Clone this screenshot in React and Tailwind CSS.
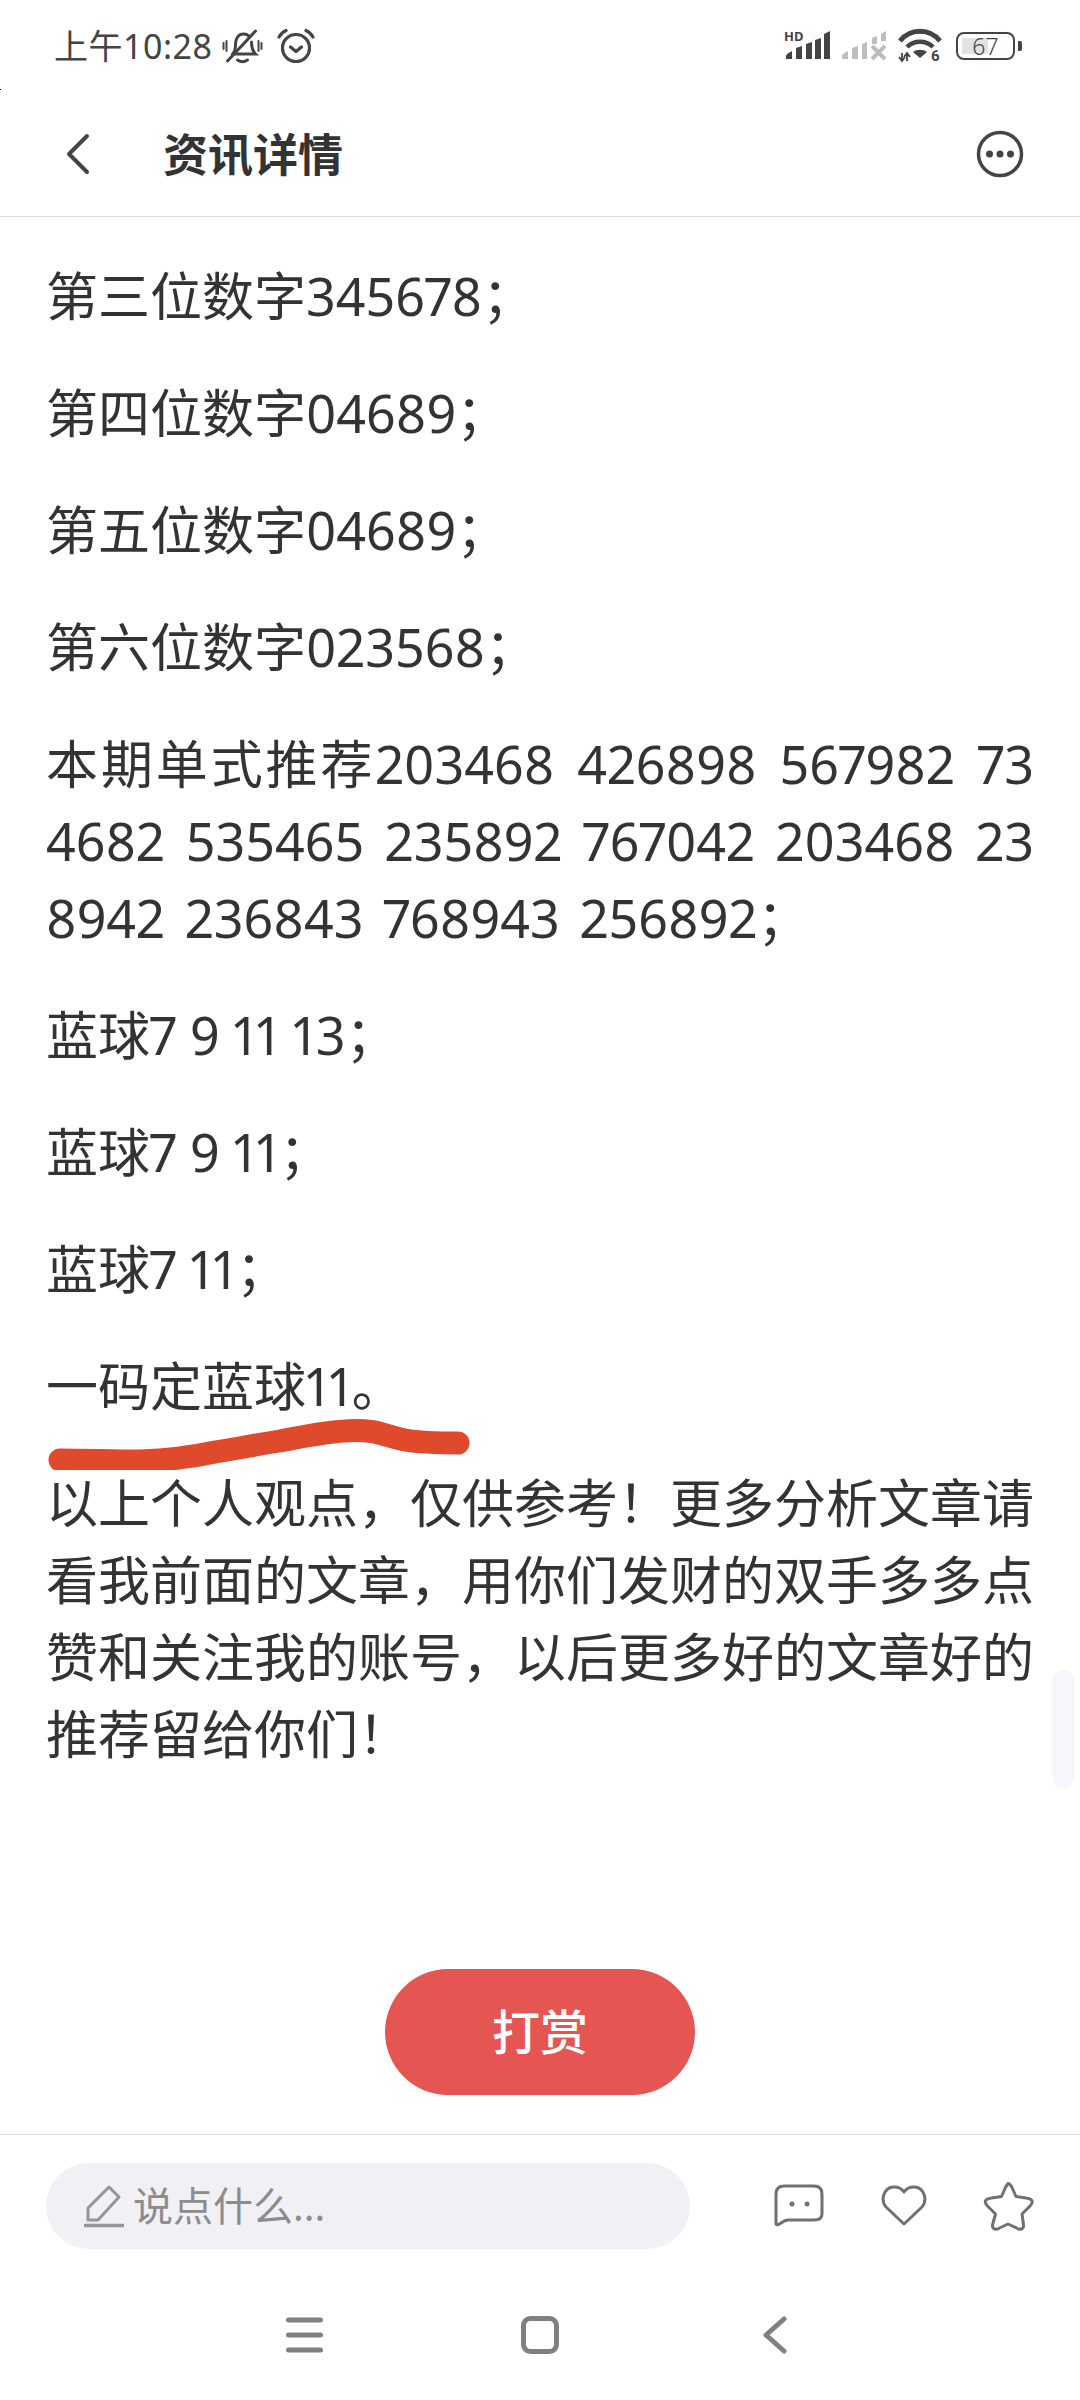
const stanzas = [
  "第三位数字345678；",
  "第四位数字04689；",
  "第五位数字04689；",
  "第六位数字023568；",
  "本期单式推荐203468 426898 567982 734682 535465 235892 767042 203468 238942 236843 768943 256892；",
  "蓝球7 9 11 13；",
  "蓝球7 9 11；",
  "蓝球7 11；",
  "一码定蓝球11。",
];

function StatusLeftIcons() {
  return (
    <>
      <svg width="41" height="36" viewBox="0 0 40 36" fill="none" stroke="#444" strokeWidth="3" strokeLinecap="round" className="ml-[10px]">
        <path d="M10 26c2-2 3-4 3-9 0-7 3-11 8-11 3 0 5 1 6 3M29 14c0 6 1 9 4 12H12" />
        <path d="M15 32c3 2 7 2 10 0" />
        <path d="M4 13v10M1 15v6M36 13v10M39 15v6" strokeWidth="2" />
        <path d="M5 33 33 3" />
      </svg>
      <svg width="38" height="36" viewBox="0 0 38 36" fill="none" stroke="#444" strokeWidth="3.200" strokeLinecap="round" strokeLinejoin="round" className="ml-[14px]">
        <circle cx="19" cy="20" r="13.500" />
        <path d="m13.500 19 5.500 4.500 5.500-4.500" />
        <path d="M2 9c1.500-2.500 3.500-5 7-6.500M36 9c-1.500-2.500-3.500-5-7-6.500" />
      </svg>
    </>
  );
}

function StatusRightIcons() {
  return (
    <>
      <div className="relative w-[44px] h-[30px]">
        <span className="absolute left-[-2px] top-[-1px] text-[13px] leading-[13px] font-bold text-[#444]">HD</span>
        <svg width="44" height="30" viewBox="0 0 44 30" fill="#444">
          <path d="M0 28v-3q0-2 6-5v8ZM10 28V17l6-2v13ZM20 28V13l6-2v17ZM29 28V9l6-2v21ZM38 28V3l6-3v28Z" />
        </svg>
      </div>
      <svg width="44" height="30" viewBox="0 0 44 30" fill="#bdbdbd" className="ml-[12px]">
        <path d="M0 28v-3q0-2 6-5v8ZM10 28V17l6-2v13ZM20 28V13l5-2v17ZM30 13V7l5-2v8ZM39 10V3l5-3v10Z" />
        <path d="m30 15 13 13M43 15 30 28" stroke="#bdbdbd" strokeWidth="4" fill="none" />
      </svg>
      <svg width="44" height="40" viewBox="0 0 44 40" fill="none" className="ml-[12px]">
        <g transform="translate(0 3)">
          <path d="M2 12C12-1 32-1 42 12" stroke="#444" strokeWidth="5" />
          <path d="M9 18c7-7 19-7 26 0" stroke="#444" strokeWidth="4.500" />
          <path d="M15 23c4-3 10-3 14 0l-7 6Z" fill="#444" />
          <path d="M4 24v8M1 28l3 4 3-4M9 32v-8M6 28l3-4 3 4" stroke="#444" strokeWidth="1.800" />
          <text x="33" y="32" fontSize="15" fontWeight="700" fill="#444" fontFamily="Roboto">6</text>
        </g>
      </svg>
      <div className="ml-[14px] relative w-[59px] h-[28px] rounded-[8px] border-[2.500px] border-[#444] flex items-center justify-center">
        <div className="absolute left-[4px] top-[4px] bottom-[4px] w-[26px] bg-[#e2e2e2]" />
        <span className="relative text-[23px] leading-none text-[#444] font-light">67</span>
        <div className="absolute right-[-9px] top-[7px] w-[4px] h-[10px] rounded-r-[2px] bg-[#444]" />
      </div>
    </>
  );
}

export default function App() {
  return (
    <div className="relative w-[1080px] h-[2400px] bg-white flex flex-col overflow-hidden font-['Noto_Sans','Noto_Sans_CJK_SC',sans-serif] text-[#333]">
      <div className="h-[92px] flex items-center pl-[54px] pr-[65px] shrink-0">
        <span className="text-[34px] leading-none tracking-[0.5px] text-[#444]">上午10:28</span>
        <StatusLeftIcons />
        <div className="ml-auto flex items-center">
          <StatusRightIcons />
        </div>
      </div>

      <div className="h-[125px] shrink-0 flex items-center border-b border-[#dcdcdc]">
        <svg width="24" height="42" viewBox="0 0 24 42" fill="none" stroke="#444" strokeWidth="4" strokeLinecap="round" strokeLinejoin="round" className="ml-[66px]">
          <path d="M21 3 3 21l18 18" />
        </svg>
        <h1 className="ml-[73px] text-[45px] leading-none font-semibold text-[#333]">资讯详情</h1>
        <svg width="50" height="50" viewBox="0 0 50 50" fill="#444" className="ml-auto mr-[55px]">
          <circle cx="25" cy="25" r="21.500" fill="none" stroke="#444" strokeWidth="3.500" />
          <circle cx="14.500" cy="25" r="3.500" />
          <circle cx="25" cy="25" r="3.500" />
          <circle cx="35.500" cy="25" r="3.500" />
        </svg>
      </div>

      <div className="flex-1 min-h-0 flex flex-col">
        <div className="pt-[40px] pl-[46px] pr-[46px] text-[52px] leading-[77px] text-justify proportional-nums break-all">
          {stanzas.map((s) => (
            <p key={s} className={s.length > 40 ? "mb-[40px] [word-spacing:6.500px]" : "mb-[40px]"}>{s}</p>
          ))}
          <p>以上个人观点，仅供参考！更多分析文章请看我前面的文章，用你们发财的双手多多点赞和关注我的账号，以后更多好的文章好的推荐留给你们！</p>
        </div>
        <button className="mt-auto mb-[39px] mx-auto w-[310px] h-[126px] rounded-full bg-[#e55552] text-white text-[48px] font-medium">
          打赏
        </button>
      </div>

      <div className="shrink-0 border-t border-[#dcdcdc] pt-[28px] pb-[21px] flex items-center">
        <div className="ml-[46px] w-[644px] h-[86px] rounded-full bg-[#f1f1f5] flex items-center pl-[38px]">
          <svg width="40" height="44" viewBox="0 0 40 44" fill="none" stroke="#959595" strokeWidth="3" strokeLinejoin="round">
            <path d="M4 36V24L25 3l10 10-21 23Z" />
            <path d="M1 41.500h38" strokeLinecap="round" strokeWidth="3.500" />
          </svg>
          <span className="ml-[9px] text-[40px] leading-none text-[#8c8c8c]">说点什么...</span>
        </div>
        <svg width="50" height="44" viewBox="0 0 50 44" fill="none" stroke="#707070" strokeWidth="3" strokeLinejoin="round" className="ml-[84px]">
          <path d="M2 40V10q0-8 8-8h30q8 0 8 8v20q0 6-8 6H14q-3 0-7 3t-5 1Z" />
          <circle cx="18" cy="20" r="2.500" fill="#707070" stroke="none" />
          <circle cx="33" cy="20" r="2.500" fill="#707070" stroke="none" />
        </svg>
        <svg width="46" height="42" viewBox="0 0 46 42" fill="none" stroke="#707070" strokeWidth="3" strokeLinejoin="round" className="ml-[57px]">
          <path d="M23 39 5 22C-1 15 3 3 12 2c5-.5 9 2 11 5 2-3 6-5.500 11-5 9 1 13 13 7 20Z" />
        </svg>
        <svg width="52" height="50" viewBox="0 0 52 50" fill="none" stroke="#707070" strokeWidth="3" strokeLinejoin="round" className="ml-[55px]">
          <path d="M26 2.500c2 0 3 2 4 4l4 9 10 1.500c4 .5 7 2 6 5-.5 2-2 3-4 5l-6 6 1.500 11c.5 3-2 5-5 4l-10.500-5-10.500 5c-3 1-5.500-1-5-4L13.500 33l-6-6c-2-2-3.500-3-4-5-1-3 2-4.500 6-5l10-1.500 4-9c1-2 2.500-4 2.500-4Z" />
        </svg>
      </div>

      <div className="h-[130px] shrink-0 flex items-center">
        <svg width="37" height="36" viewBox="0 0 37 36" fill="none" stroke="#808080" strokeWidth="5" strokeLinecap="round" className="ml-[286px]">
          <path d="M2.500 3h32M2.500 18h32M2.500 33h32" />
        </svg>
        <svg width="38" height="38" viewBox="0 0 38 38" fill="none" stroke="#808080" strokeWidth="5" className="ml-[198px]">
          <rect x="2.500" y="2.500" width="33" height="33" rx="7" />
        </svg>
        <svg width="24" height="38" viewBox="0 0 24 38" fill="none" stroke="#808080" strokeWidth="5" strokeLinecap="round" strokeLinejoin="round" className="ml-[204px]">
          <path d="M21 3 3 19l18 16" />
        </svg>
      </div>

      {/* hand drawn underline sits over the text */}
      <svg width="440" height="60" viewBox="0 0 440 60" fill="none" className="absolute left-[40px] top-[1410px]">
        <path d="M20 50c30 0 50 1 80 1 30-1 52-4 75-9 25-4 45-8 65-11 25-5 45-9 65-10 12-1 22 0 30 1 12 3 20 6 30 8 12 2 22 3 53 3" stroke="#e04a2c" strokeWidth="23" strokeLinecap="round" />
      </svg>

      <div className="absolute left-[1055px] top-[1672px] w-[17px] h-[114px] rounded-full bg-[#f7f8fd] shadow-[0_0_3px_2px_#f3f3f3]" />
      <div className="absolute left-0 top-[89px] w-[1px] h-[1px] bg-black" />
    </div>
  );
}
